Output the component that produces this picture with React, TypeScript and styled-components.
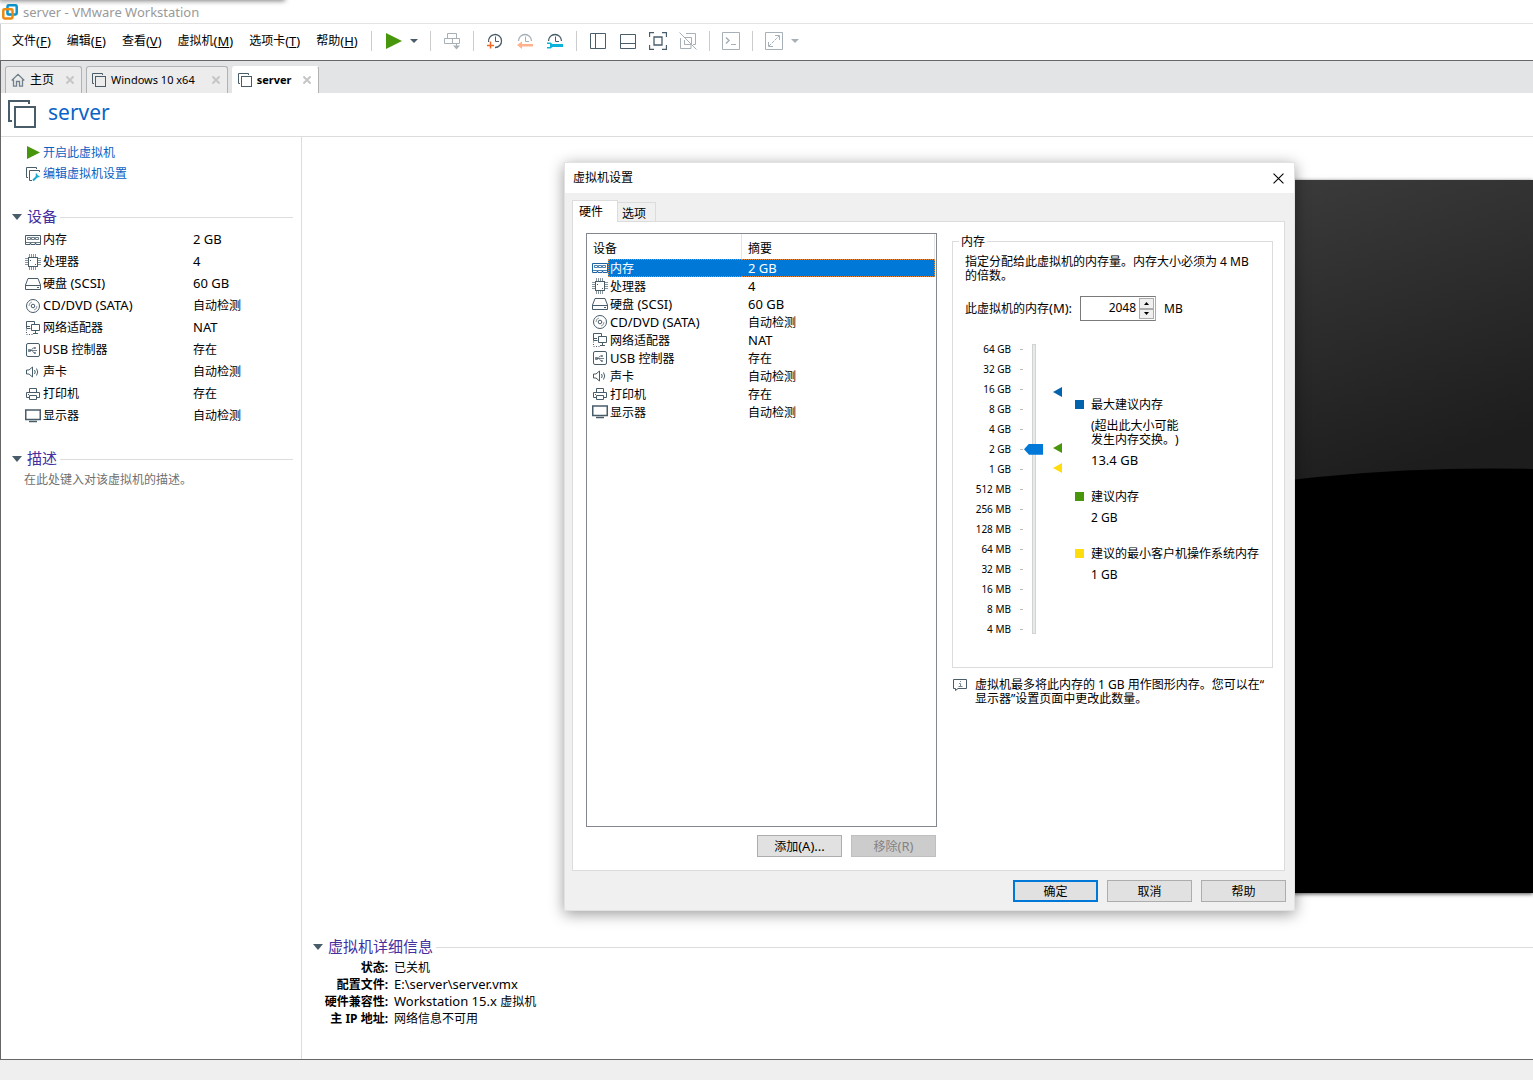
import React, { useState } from 'react';
import styled, { createGlobalStyle, css } from 'styled-components';

const Global = createGlobalStyle`
  * { box-sizing: border-box; }
  body {
    margin: 0;
    background: #fff;
    color: #000;
    font-family: "Noto Sans", "Noto Sans CJK SC", sans-serif;
    font-size: 12px;
    line-height: 14px;
    text-spacing-trim: space-all;
  }
  button, input { font: inherit; color: inherit; margin: 0; }
  svg { display: block; flex: none; }
  table { border-collapse: separate; border-spacing: 0; }
  th, td { padding: 0; text-align: left; font-weight: 400; }
`;

const INK = '#485c69';
const FADED = '#a7b0b6';
const GREEN = '#48960c';

/* Latin runs are set one size larger than the Chinese text around them. */
const Latin = styled.span`
  font-size: 13px;
  line-height: 12px;
`;

const Mixed = ({ children }: { children: string }) => (
  <span>
    {children.split(/([\x20-\x7e]+)/).map((part, i) => (i % 2 ? <Latin key={i}>{part}</Latin> : part))}
  </span>
);

/* ---------- icons ---------- */

type IconName =
  | 'memory' | 'cpu' | 'disk' | 'disc' | 'network' | 'usb' | 'sound' | 'printer' | 'display';

const glyphs: Record<IconName, React.ReactNode> = {
  memory: (
    <>
      <path d="M.5 3.5h15v9h-4.500v-1h-1v1h-4v-1h-1v1H.5z" />
      <path d="M2.500 5.500h3v2h-3zM6.500 5.500h3v2h-3zM10.500 5.500h3v2h-3zM1 10.500h14" strokeOpacity=".8" />
    </>
  ),
  cpu: (
    <>
      <rect x="3.5" y="3.5" width="9" height="9" />
      <path
        d="M4.500 0v3M6.500 0v3M8.500 0v3M10.500 0v3M4.500 13v3M6.500 13v3M8.500 13v3M10.500 13v3M0 4.500h3M0 6.500h3M0 8.500h3M0 10.500h3M13 4.500h3M13 6.500h3M13 8.500h3M13 10.500h3"
        strokeOpacity=".65"
      />
      <path d="M5 6.500h1M10 10.500h1" />
    </>
  ),
  disk: (
    <>
      <path d="M3 2.500h10l2.500 6.500v4.500H.5V9z" />
      <path d="M1 9.500h14M12 11.500h2" />
    </>
  ),
  disc: (
    <>
      <circle cx="8" cy="8" r="6.5" />
      <circle cx="8" cy="8" r="1.800" />
      <path d="M4 8a4 4 0 0 1 3-4M12 8a4 4 0 0 1-3 4" strokeOpacity=".6" />
    </>
  ),
  network: (
    <>
      <path d="M5.500 8.500h-4v-7h8v3M5 6.500H1.500" />
      <path d="M6.500 4.500h8v6h-8zM10.500 11v2M8 13.500h5" />
      <path d="M1.500 9.500v5h7" strokeDasharray="1 1.500" />
    </>
  ),
  usb: (
    <>
      <rect x="1.5" y="1.5" width="13" height="13" rx="1.5" />
      <path d="M4 8.500h8M6 8.500l2-2.500h2M7 8.500l2 2.500h1M3.500 7.500h2v2h-2zM9.500 5.500h1v1h-1zM9.500 10.500h1v1h-1z" strokeOpacity=".75" />
    </>
  ),
  sound: (
    <>
      <path d="M1.500 6v4h2.500l3.500 3V3L4 6z" />
      <path d="M9.500 6q1.500 2 0 4M11.500 4.500q2.500 3.500 0 7" />
    </>
  ),
  printer: (
    <>
      <path d="M4.500 6V2.500h7V6M4.500 11.500h-3v-5h13v5h-3" />
      <path d="M4.500 9.500h7v4h-7zM3 8.500h1" />
    </>
  ),
  display: (
    <>
      <rect x=".75" y="2" width="14.500" height="9.500" strokeWidth="1.500" />
      <path d="M4 13.500h8" strokeWidth="1.500" />
    </>
  ),
};

const DeviceIcon = ({ name, color = INK }: { name: IconName; color?: string }) => (
  <svg width="16" height="16" viewBox="0 0 16 16" fill="none" stroke={color} aria-hidden="true">
    {glyphs[name]}
  </svg>
);

const VmIcon = () => (
  <svg width="14" height="14" viewBox="0 0 14 14" fill="none" stroke={INK} aria-hidden="true">
    <path d="M2 10.500H.5V.5h10V2" />
    <rect x="3.500" y="3.500" width="10" height="10" />
  </svg>
);

const BigVmIcon = () => (
  <svg width="28" height="28" viewBox="0 0 28 28" fill="none" stroke={INK} strokeWidth="2" aria-hidden="true">
    <path d="M4 21H1V1h20v3" />
    <rect x="7" y="7" width="20" height="20" />
  </svg>
);

const LogoIcon = () => (
  <svg width="16" height="16" viewBox="0 0 16 16" fill="none" strokeWidth="2.500" aria-hidden="true">
    <rect x="5.500" y="1.300" width="9.200" height="9.200" rx="1.200" stroke="#0d95c9" />
    <rect x="1.300" y="5.300" width="9.200" height="9.200" rx="1.200" stroke="#ee8a10" />
    <path d="M5.500 6.500v4h4" stroke="#0d95c9" strokeWidth="1.500" />
  </svg>
);

const HomeIcon = () => (
  <svg width="14" height="14" viewBox="0 0 14 14" fill="none" stroke="#71808a" strokeWidth="1.300" aria-hidden="true">
    <path d="M.7 7.500L7 1.300l6.300 6.200M2.500 6.500v6.700h3V8.500h3v4.700h3V6.500" />
  </svg>
);

const PlayIcon = ({ size = 16 }: { size?: number }) => (
  <svg width={size} height={size} viewBox="0 0 16 16" fill={GREEN} aria-hidden="true">
    <path d="M0 0l16 8-16 8z" />
  </svg>
);

const CaretIcon = ({ color = INK, wide = false }: { color?: string; wide?: boolean }) => (
  <svg width={wide ? 10 : 8} height={wide ? 6 : 4} viewBox="0 0 8 4" preserveAspectRatio="none" fill={color} aria-hidden="true">
    <path d="M0 0h8L4 4z" />
  </svg>
);

const CrossIcon = ({ size, color, weight }: { size: number; color: string; weight: number }) => (
  <svg width={size} height={size} viewBox="0 0 10 10" stroke={color} strokeWidth={weight} aria-hidden="true">
    <path d="M.5.5l9 9M9.500.5l-9 9" />
  </svg>
);

const EditVmIcon = () => (
  <svg width="16" height="16" viewBox="0 0 16 16" fill="none" stroke={INK} aria-hidden="true">
    <path d="M3 11.500H1.500v-10h10V3" />
    <path d="M7 14.500H4.500v-10h10V6" />
    <path d="M8 14.500l5-5" stroke="#19a9d1" strokeWidth="2" />
    <path d="M11.500 7.500v3h3" stroke="#19a9d1" strokeWidth="1.500" />
  </svg>
);

const ToolSvg = ({ faded = false, children }: { faded?: boolean; children: React.ReactNode }) => (
  <svg width="18" height="18" viewBox="0 0 18 18" fill="none" stroke={faded ? FADED : INK} aria-hidden="true">
    {children}
  </svg>
);

const Clock = ({ half = false }: { half?: boolean }) => (
  <>
    <path d={half ? 'M2.500 9a6.500 6.500 0 0 1 13 0' : 'M2.600 10A6.500 6.500 0 1 1 9 15.500'} strokeWidth="1.300" />
    <path d="M9.500 4.500v5H13" />
  </>
);

const tools: { label: string; faded?: boolean; art: React.ReactNode }[][] = [
  [
    {
      label: '发送 Ctrl+Alt+Del',
      faded: true,
      art: (
        <>
          <path d="M4.500 1.500h9v5h-9zM1.500 6.500h8v5h-8zM9.500 6.500h7v5h-7zM13.500 12v4" />
          <path d="M10 13.500h7l-3.500 4z" fill={FADED} stroke="none" />
        </>
      ),
    },
  ],
  [
    {
      label: '拍摄快照',
      art: (
        <>
          <Clock />
          <path d="M4.500 9.500v7M1 13.500h7" stroke="#f26722" strokeWidth="1.500" />
        </>
      ),
    },
    {
      label: '恢复快照',
      faded: true,
      art: (
        <>
          <Clock half />
          <path d="M1 13l5-3.500V12h11v2.500H6V17z" fill="#ffb28c" stroke="none" />
        </>
      ),
    },
    {
      label: '管理快照',
      art: (
        <>
          <Clock half />
          <path d="M1 10.500h3.500l2 1.500H17v3H6.500l-2 1.500H1v-1.500h3v-3H1z" fill="#0ab4d8" stroke="none" />
        </>
      ),
    },
  ],
  [
    { label: '显示库', art: <path d="M1.500 1.500h15v15h-15zM6.500 2v14" /> },
    { label: '显示缩略图', art: <path d="M1.500 2.500h15v14h-15zM2 11.500h14" /> },
    {
      label: '全屏',
      art: <path d="M.5 5V.5H5M13 .5h4.500V5M17.500 13v4.500H13M5 17.500H.5V13M5 5h8v8H5z" strokeWidth="1.300" />,
    },
    {
      label: 'Unity',
      faded: true,
      art: <path d="M7 1.500h9.500v11H14M6 5.500h6.500v7M1.500 6v10.500H12v-4H5.500V8M.5.5l17 17" />,
    },
  ],
  [
    {
      label: '控制台视图',
      faded: true,
      art: (
        <>
          <path d="M.5.500h17v17H.5zM9 12.500h5" />
          <path d="M4 5.500l3 3-3 3" strokeWidth="1.500" />
        </>
      ),
    },
  ],
];

/* ---------- main window ---------- */

const Window = styled.div`
  position: relative;
  display: flex;
  flex-direction: column;
  min-height: 100vh;
  overflow: hidden;
`;

const NeighbourShadow = styled.div`
  position: absolute;
  top: -10px;
  left: 0;
  width: 284px;
  height: 10px;
  box-shadow: 0 0 5px 1px rgba(0, 0, 0, 0.5);
`;

const TitleBar = styled.header`
  display: flex;
  align-items: center;
  gap: 5px;
  height: 24px;
  padding-left: 2px;
  border-bottom: 1px solid #e3e3e3;
  color: #999;
`;

const MenuRow = styled.div`
  display: flex;
  align-items: center;
  height: 36px;
  padding: 0 12px 2px 11px;
  border-left: 1px solid #ccc;
`;

const Menu = styled.nav`
  display: flex;
  gap: 16px;
  margin-right: 13px;
`;

const PlainButton = styled.button`
  display: flex;
  align-items: center;
  padding: 0;
  border: 0;
  background: none;
  white-space: nowrap;
`;

const ToolGroup = styled.div`
  display: flex;
  align-items: center;
  gap: 12px;
  height: 20px;
  padding: 0 12px;
  border-left: 1px solid #ccc;
`;

const DropGroup = styled(ToolGroup)`
  gap: 8px;
`;

const PlayGroup = styled(DropGroup)`
  padding-left: 14px;
`;

const Frame = styled.div`
  flex: 1;
  display: flex;
  flex-direction: column;
  border: 1px solid #666;
  border-right: 0;
`;

const TabStrip = styled.div`
  display: flex;
  align-items: flex-end;
  gap: 4px;
  height: 32px;
  padding-left: 4px;
  background: #e3e4e6;
`;

const VmTab = styled.div<{ $active?: boolean; $gap: number }>`
  display: flex;
  align-items: center;
  gap: ${(p) => p.$gap}px;
  height: 27px;
  padding: 0 7px 0 5px;
  border: 1px solid #b0b2b4;
  border-bottom: 0;
  border-radius: 3px 3px 0 0;
  background: #ececed;
  ${(p) =>
    p.$active &&
    css`
      border-left-color: #fff;
      border-top-color: #fff;
      background: #fff;
      font-weight: 700;
    `}
`;

const TabLabel = styled(PlainButton)<{ $latin?: boolean }>`
  gap: 5px;
  font-size: ${(p) => (p.$latin ? 11 : 12)}px;
`;

const VmHeader = styled.div`
  display: flex;
  align-items: center;
  gap: 12px;
  height: 44px;
  padding: 0 0 2px 7px;
  border-bottom: 1px solid #ddd;
`;

const VmName = styled.h1`
  margin: 0;
  padding-bottom: 3px;
  font-size: 21px;
  line-height: 24px;
  font-weight: 400;
  color: #0a64c8;
`;

const Body = styled.div`
  flex: 1;
  display: grid;
  grid-template-columns: 301px 1fr;
`;

const Side = styled.aside`
  padding: 5px 8px 0 11px;
  border-right: 1px solid #ddd;
`;

const ActionLink = styled.a`
  display: flex;
  align-items: center;
  gap: 2px;
  height: 21px;
  padding-left: 13px;
  color: #0a5fc4;
  text-decoration: none;
`;

const PlaySlot = styled.span`
  display: flex;
  width: 16px;
  padding-left: 2px;
`;

const Section = styled.section<{ $gap?: number }>`
  margin-top: ${(p) => p.$gap ?? 0}px;
`;

const SectionHead = styled.h2`
  display: flex;
  align-items: center;
  gap: 5px;
  height: 21px;
  margin: 0;
  padding-bottom: 2px;
  font-size: 15px;
  font-weight: 400;
  line-height: 19px;
  color: #45309f;
  svg { margin-top: 1px; }
  &::after {
    content: '';
    flex: 1;
    height: 1px;
    margin: 2px 0 0 -2px;
    background: #ddd;
  }
`;

const DeviceTable = styled.table`
  width: 100%;
  margin-top: 1px;
  table-layout: fixed;
  td { height: 22px; }
  td:first-child { width: 181px; padding-left: 13px; }
`;

const IconText = styled.span`
  display: flex;
  align-items: center;
  gap: 2px;
`;

const Description = styled.p`
  margin: 0;
  padding: 3px 12px;
  color: #707070;
`;

const Main = styled.main`
  display: flex;
  flex-direction: column;
`;

const Stage = styled.div`
  flex: 1;
  display: flex;
  justify-content: flex-end;
  padding: 43px 0 44px;
`;

const Preview = styled.svg`
  width: 640px;
  height: 100%;
  min-height: 712px;
  background: #000;
  box-shadow: 0 1px 4px rgba(0, 0, 0, 0.7);
`;

const Details = styled(Section)`
  padding: 0 0 32px 11px;
`;

const DetailList = styled.dl`
  display: grid;
  grid-template-columns: 75px 1fr;
  grid-auto-rows: 17px;
  column-gap: 6px;
  margin: 0;
  padding-top: 1px;
  line-height: 17px;
  dt { font-weight: 700; text-align: right; white-space: nowrap; }
  dd { margin: 0; }
`;

const StatusBar = styled.footer`
  height: 20px;
  background: #efefef;
`;

/* ---------- settings dialog ---------- */

const Dialog = styled.section`
  position: absolute;
  top: 162px;
  left: 564px;
  width: 731px;
  border: 1px solid #e2e2e2;
  background: #f0f0f0;
  box-shadow: 0 3px 14px rgba(0, 0, 0, 0.4);
`;

const DialogTitle = styled.div`
  display: flex;
  align-items: center;
  justify-content: space-between;
  height: 30px;
  padding: 0 10px 0 8px;
  background: #fff;
  h2 { margin: 0; font-size: 12px; font-weight: 400; }
`;

const DialogTabs = styled.div`
  display: flex;
  align-items: flex-end;
  padding: 7px 7px 0;
`;

const DialogTab = styled.button<{ $active?: boolean }>`
  height: 19px;
  width: 38px;
  padding: 3px 0 0 4px;
  border: 1px solid #dcdcdc;
  border-width: 1px 1px 0 0;
  background: #f0f0f0;
  white-space: nowrap;
  text-align: left;
  ${(p) =>
    p.$active &&
    css`
      z-index: 1;
      height: 22px;
      width: 46px;
      margin-bottom: -1px;
      padding: 0 0 0 6px;
      border-left-width: 1px;
      background: #fff;
    `}
`;

const Panel = styled.div`
  display: grid;
  grid-template-columns: 351px 1fr;
  column-gap: 15px;
  margin: 0 9px 0 7px;
  padding: 11px 11px 13px 13px;
  border: 1px solid #dcdcdc;
  background: #fff;
`;

const ListBox = styled.div`
  height: 594px;
  padding-right: 1px;
  border: 1px solid #828790;
`;

const ListTable = styled.table`
  width: 100%;
  table-layout: fixed;
  th { height: 25px; padding: 5px 0 0 6px; border-right: 1px solid #e5e5e5; }
  td { height: 18px; padding-top: 2px; line-height: 14px; }
  td:last-child { padding-left: 6px; }
  td:first-child { padding: 0 0 0 5px; }
`;

const IconCol = styled.col`width: 21px;`;
const NameCol = styled.col`width: 134px;`;

const ListRow = styled.tr<{ $selected?: boolean }>`
  td:nth-child(2) { padding-left: 2px; }
  ${(p) =>
    p.$selected &&
    css`
      color: #fff;
      td:nth-child(n + 2) {
        background: #0078d7;
        border: 1px dotted #e58a3c;
        border-width: 1px 0;
      }
      td:nth-child(2) { border-left-width: 1px; padding-left: 1px; }
      td:last-child { border-right-width: 1px; }
    `}
`;

const ButtonRow = styled.div<{ $footer?: boolean }>`
  display: flex;
  justify-content: flex-end;
  gap: 9px;
  padding: ${(p) => (p.$footer ? '9px 8px 8px' : '8px 1px 0')};
`;

const PushButton = styled.button<{ $primary?: boolean }>`
  width: 85px;
  height: 22px;
  padding: 2px 0 0;
  border: ${(p) => (p.$primary ? '2px solid #0078d7' : '1px solid #adadad')};
  background: #e1e1e1;
  &:disabled {
    border-color: #bfbfbf;
    background: #ccc;
    color: #838383;
  }
`;

const Group = styled.fieldset`
  min-width: 0;
  height: 435px;
  margin: 0;
  padding: 6px 12px 0;
  border: 1px solid #dcdcdc;
  legend { margin-left: -6px; padding: 2px 2px 0; }
`;

const Intro = styled.p`
  margin: 0;
`;

const MemoryRow = styled.div`
  display: flex;
  align-items: center;
  gap: 8px;
  margin: 13px 0 18px;
`;

const Spinner = styled.div`
  display: flex;
  width: 76px;
  height: 25px;
  padding: 1px;
  border: 1px solid #7a7a7a;
  border-right-color: #ababab;
  input {
    flex: 1;
    min-width: 0;
    padding: 0 3px 2px 0;
    border: 0;
    outline: 0;
    background: none;
    font-size: 12px;
    text-align: right;
  }
`;

const SpinButtons = styled.div`
  display: grid;
  grid-template-rows: 1fr 1fr;
  width: 15px;
  button {
    display: flex;
    align-items: center;
    justify-content: center;
    padding: 0;
    border: 1px solid #acacac;
    background: #f0f0f0;
  }
`;

const Scale = styled.div`
  display: grid;
  grid-template-columns: 59px 19px 9px 1fr;
  align-items: start;
`;

const Ticks = styled.ol`
  margin: 0;
  padding: 0 1px 0 0;
  list-style: none;
  font-size: 10px;
  li {
    display: flex;
    align-items: center;
    justify-content: flex-end;
    gap: 9px;
    height: 20px;
    white-space: nowrap;
  }
  li::after {
    content: '';
    width: 3px;
    height: 1px;
    background: #bbb;
  }
`;

const MemorySlider = styled.input`
  writing-mode: vertical-lr;
  direction: rtl;
  appearance: none;
  width: 19px;
  height: 290px;
  margin: 5px 0 0;
  background:
    linear-gradient(#e6eaea, #e6eaea) 9px 1px / 2px 288px no-repeat,
    linear-gradient(#cfd3d3, #cfd3d3) 8px 0 / 4px 290px no-repeat;
  &::-webkit-slider-runnable-track { width: 19px; height: 100%; }
  &::-webkit-slider-thumb {
    appearance: none;
    width: 19px;
    height: 11px;
    background: #0078d7;
    clip-path: polygon(0 50%, 5px 0, 100% 0, 100% 100%, 5px 100%);
  }
`;

const Legend = styled.dl`
  margin: 0;
  padding: 59px 0 0 23px;
`;

const LegendItem = styled.div<{ $color: string }>`
  display: flex;
  flex-direction: column;
  gap: 7px;
  margin-bottom: 22px;
  dt {
    display: flex;
    align-items: center;
    gap: 7px;
    white-space: nowrap;
  }
  dt::before {
    content: '';
    width: 9px;
    height: 9px;
    margin-bottom: 2px;
    background: ${(p) => p.$color};
  }
  dd { margin: 0; padding-left: 16px; white-space: nowrap; }
`;

const Note = styled.p`
  display: flex;
  gap: 7px;
  margin: 10px 0 0;
  white-space: nowrap;
`;

/* ---------- data ---------- */

const menus: [string, string][] = [
  ['文件', 'F'], ['编辑', 'E'], ['查看', 'V'], ['虚拟机', 'M'], ['选项卡', 'T'], ['帮助', 'H'],
];

const devices: { icon: IconName; name: string; value: string }[] = [
  { icon: 'memory', name: '内存', value: '2 GB' },
  { icon: 'cpu', name: '处理器', value: '4' },
  { icon: 'disk', name: '硬盘 (SCSI)', value: '60 GB' },
  { icon: 'disc', name: 'CD/DVD (SATA)', value: '自动检测' },
  { icon: 'network', name: '网络适配器', value: 'NAT' },
  { icon: 'usb', name: 'USB 控制器', value: '存在' },
  { icon: 'sound', name: '声卡', value: '自动检测' },
  { icon: 'printer', name: '打印机', value: '存在' },
  { icon: 'display', name: '显示器', value: '自动检测' },
];

const sizes = [
  '64 GB', '32 GB', '16 GB', '8 GB', '4 GB', '2 GB', '1 GB', '512 MB',
  '256 MB', '128 MB', '64 MB', '32 MB', '16 MB', '8 MB', '4 MB',
];

const details: [string, string][] = [
  ['状态:', '已关机'],
  ['配置文件:', 'E:\\server\\server.vmx'],
  ['硬件兼容性:', 'Workstation 15.x 虚拟机'],
  ['主 IP 地址:', '网络信息不可用'],
];

const Settings = () => {
  const [step, setStep] = useState(9);
  const memory = 4 * 2 ** step;
  const move = (by: number) => setStep(Math.max(0, Math.min(14, step + by)));
  return (
    <Dialog role="dialog" aria-labelledby="settings-title">
      <DialogTitle>
        <h2 id="settings-title">虚拟机设置</h2>
        <PlainButton aria-label="关闭"><CrossIcon size={11} color="#000" weight={1} /></PlainButton>
      </DialogTitle>
      <DialogTabs role="tablist">
        <DialogTab $active role="tab" aria-selected="true">硬件</DialogTab>
        <DialogTab role="tab" aria-selected="false">选项</DialogTab>
      </DialogTabs>
      <Panel>
        <div>
          <ListBox>
            <ListTable>
              <colgroup><IconCol /><NameCol /><col /></colgroup>
              <thead>
                <tr><th colSpan={2}>设备</th><th>摘要</th></tr>
              </thead>
              <tbody>
                {devices.map((d, i) => (
                  <ListRow key={d.name} $selected={i === 0}>
                    <td><DeviceIcon name={d.icon} color={i === 0 ? '#1f62a0' : INK} /></td>
                    <td><Mixed>{d.name}</Mixed></td>
                    <td><Mixed>{d.value}</Mixed></td>
                  </ListRow>
                ))}
              </tbody>
            </ListTable>
          </ListBox>
          <ButtonRow>
            <PushButton><Mixed>添加(A)...</Mixed></PushButton>
            <PushButton disabled><Mixed>移除(R)</Mixed></PushButton>
          </ButtonRow>
        </div>
        <div>
          <Group>
            <legend>内存</legend>
            <Intro>指定分配给此虚拟机的内存量。内存大小必须为 4 MB<br />的倍数。</Intro>
            <MemoryRow>
              <label htmlFor="memory"><Mixed>此虚拟机的内存(M):</Mixed></label>
              <Spinner>
                <input id="memory" type="text" value={memory} readOnly />
                <SpinButtons>
                  <button aria-label="增加" onClick={() => move(1)}>
                    <svg width="5" height="3" viewBox="0 0 5 3" aria-hidden="true"><path d="M0 3h5L2.500 0z" /></svg>
                  </button>
                  <button aria-label="减少" onClick={() => move(-1)}>
                    <svg width="5" height="3" viewBox="0 0 5 3" aria-hidden="true"><path d="M0 0h5L2.500 3z" /></svg>
                  </button>
                </SpinButtons>
              </Spinner>
              <span>MB</span>
            </MemoryRow>
            <Scale>
              <Ticks>{sizes.map((s) => <li key={s}>{s}</li>)}</Ticks>
              <MemorySlider
                type="range" min={0} max={14} value={step} aria-label="内存大小"
                onChange={(e) => setStep(Number(e.target.value))}
              />
              <svg width="20" height="290" viewBox="0 0 20 290" aria-hidden="true">
                <path d="M10 53l9-5v10z" fill="#0063ab" />
                <path d="M10 109l9-5v10z" fill={GREEN} />
                <path d="M10 129l9-5v10z" fill="#ffdc0b" />
              </svg>
              <Legend>
                <LegendItem $color="#0063ab">
                  <dt>最大建议内存</dt>
                  <dd>(超出此大小可能<br />发生内存交换。)</dd>
                  <dd><Mixed>13.4 GB</Mixed></dd>
                </LegendItem>
                <LegendItem $color={GREEN}>
                  <dt>建议内存</dt>
                  <dd>2 GB</dd>
                </LegendItem>
                <LegendItem $color="#ffdc0b">
                  <dt>建议的最小客户机操作系统内存</dt>
                  <dd>1 GB</dd>
                </LegendItem>
              </Legend>
            </Scale>
          </Group>
          <Note>
            <svg width="16" height="14" viewBox="0 0 16 14" fill="none" stroke={INK} aria-hidden="true">
              <path d="M1.500 1.500h13v9H6l-2.500 2v-2h-2z" />
              <path d="M7 5.500h1.500v3M6.500 8.500h4M8 3.500h1" stroke="#7a8a94" />
            </svg>
            <span>虚拟机最多将此内存的 1 GB 用作图形内存。您可以在“<br />显示器”设置页面中更改此数量。</span>
          </Note>
        </div>
      </Panel>
      <ButtonRow $footer>
        <PushButton $primary>确定</PushButton>
        <PushButton>取消</PushButton>
        <PushButton>帮助</PushButton>
      </ButtonRow>
    </Dialog>
  );
};

export default function App() {
  const close = <CrossIcon size={8} color="#c4c6c8" weight={2.5} />;
  return (
    <>
      <Global />
      <Window>
        <NeighbourShadow />
        <TitleBar><LogoIcon /><Latin>server - VMware Workstation</Latin></TitleBar>
        <MenuRow>
          <Menu>
            {menus.map(([text, key]) => (
              <PlainButton key={key}>{text}<Latin>(<u>{key}</u>)</Latin></PlainButton>
            ))}
          </Menu>
          <PlayGroup>
            <PlainButton aria-label="开机"><PlayIcon /></PlainButton>
            <PlainButton aria-label="电源选项"><CaretIcon /></PlainButton>
          </PlayGroup>
          {tools.map((group) => (
            <ToolGroup key={group[0].label}>
              {group.map((t) => (
                <PlainButton key={t.label} aria-label={t.label}>
                  <ToolSvg faded={t.faded}>{t.art}</ToolSvg>
                </PlainButton>
              ))}
            </ToolGroup>
          ))}
          <DropGroup>
            <PlainButton aria-label="拉伸">
              <ToolSvg faded>
                <path d="M.5.500h17v17H.5zM10 3.500h4.500V8M3.500 10v4.500H8" />
                <path d="M4 14L14 4" strokeDasharray="3 1" />
              </ToolSvg>
            </PlainButton>
            <PlainButton aria-label="拉伸选项"><CaretIcon color={FADED} /></PlainButton>
          </DropGroup>
        </MenuRow>
        <Frame>
          <TabStrip>
            <VmTab $gap={12}>
              <TabLabel><HomeIcon />主页</TabLabel>
              <PlainButton aria-label="关闭主页">{close}</PlainButton>
            </VmTab>
            <VmTab $gap={17}>
              <TabLabel $latin><VmIcon />Windows 10 x64</TabLabel>
              <PlainButton aria-label="关闭 Windows 10 x64">{close}</PlainButton>
            </VmTab>
            <VmTab $active $gap={12}>
              <TabLabel $latin><VmIcon />server</TabLabel>
              <PlainButton aria-label="关闭 server">{close}</PlainButton>
            </VmTab>
          </TabStrip>
          <VmHeader><BigVmIcon /><VmName>server</VmName></VmHeader>
          <Body>
            <Side>
              <ActionLink href="#power-on"><PlaySlot><PlayIcon size={13} /></PlaySlot>开启此虚拟机</ActionLink>
              <ActionLink href="#settings"><EditVmIcon />编辑虚拟机设置</ActionLink>
              <Section $gap={23}>
                <SectionHead><CaretIcon wide />设备</SectionHead>
                <DeviceTable>
                  <tbody>
                    {devices.map((d) => (
                      <tr key={d.name}>
                        <td><IconText><DeviceIcon name={d.icon} /><Mixed>{d.name}</Mixed></IconText></td>
                        <td><Mixed>{d.value}</Mixed></td>
                      </tr>
                    ))}
                  </tbody>
                </DeviceTable>
              </Section>
              <Section $gap={22}>
                <SectionHead><CaretIcon wide />描述</SectionHead>
                <Description>在此处键入对该虚拟机的描述。</Description>
              </Section>
            </Side>
            <Main>
              <Stage>
                <Preview viewBox="0 0 640 712" preserveAspectRatio="none" aria-hidden="true">
                  <defs>
                    <linearGradient id="screen" gradientUnits="userSpaceOnUse" x1="380" y1="0" x2="480" y2="300">
                      <stop offset="0" stopColor="#3b3b3b" />
                      <stop offset="1" stopColor="#1d1d1d" />
                    </linearGradient>
                  </defs>
                  <rect width="640" height="712" fill="url(#screen)" />
                  <circle cx="597" cy="2018" r="1730" fill="#000" />
                </Preview>
              </Stage>
              <Details>
                <SectionHead><CaretIcon wide />虚拟机详细信息</SectionHead>
                <DetailList>
                  {details.map(([k, v]) => (
                    <React.Fragment key={k}><dt>{k}</dt><dd><Mixed>{v}</Mixed></dd></React.Fragment>
                  ))}
                </DetailList>
              </Details>
            </Main>
          </Body>
        </Frame>
        <StatusBar />
        <Settings />
      </Window>
    </>
  );
}
